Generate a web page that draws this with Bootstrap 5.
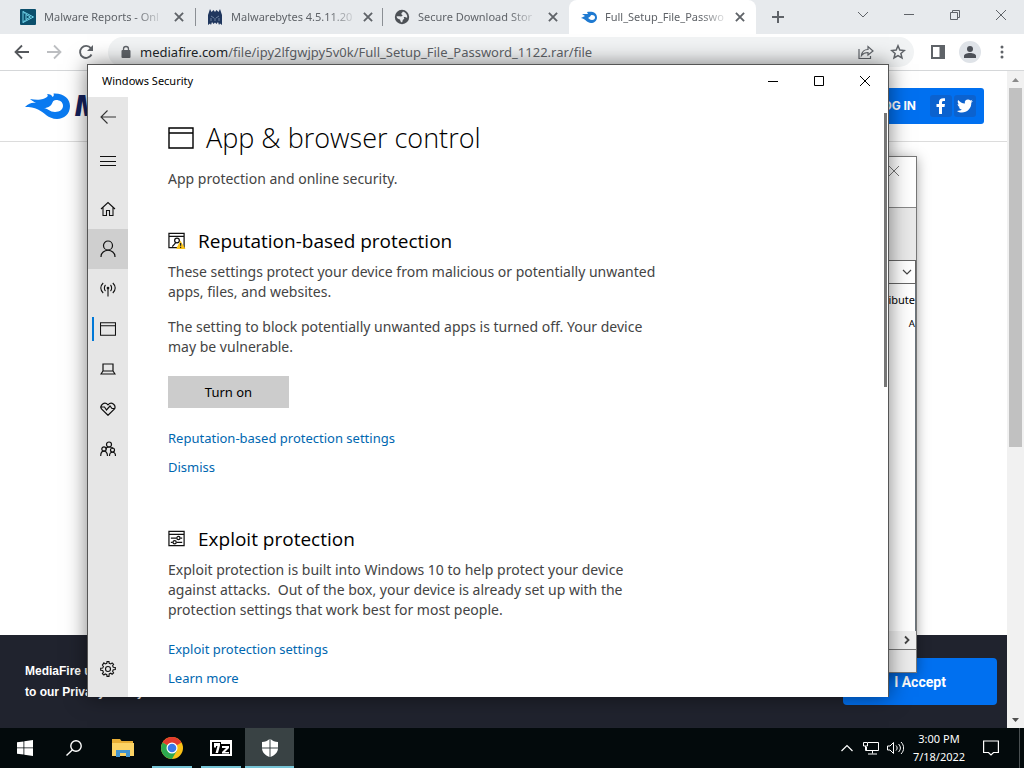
<!DOCTYPE html>
<html lang="en">
<head>
<meta charset="utf-8">
<meta name="viewport" content="width=device-width, initial-scale=1">
<title>Windows Security</title>
<link href="https://cdn.jsdelivr.net/npm/bootstrap@5.3.0/dist/css/bootstrap.min.css" rel="stylesheet">
<style>
:root{--ui:"Open Sans","Noto Sans",sans-serif;--ui-wide:"Noto Sans","Open Sans",sans-serif}
body{font-family:var(--ui-wide);font-size:11px;line-height:16px;color:#000;background:#fff}
button{font-family:inherit}
svg{display:block;flex:none}
.plain{background:none;border:0;padding:0;color:inherit;display:flex;align-items:center;justify-content:center;flex:none}
.desktop{height:100vh;min-height:600px}

/* browser */
.tabstrip{height:34px;background:#e7eaed;padding-left:8px;color:#5f6368}
.tab-item{width:187px;padding:0 8px 0 12px;position:relative}
.tab-item + .tab-item:not(.current)::before{content:"";position:absolute;left:0;top:8px;height:18px;width:1px;background:#8b8f94}
.tab-item.current{background:#fff;border-radius:8px 8px 0 0}
.tab-name{white-space:nowrap;-webkit-mask-image:linear-gradient(90deg,#000 80%,transparent 105%);mask-image:linear-gradient(90deg,#000 80%,transparent 105%)}
.tab-close{width:16px;height:16px}
.win-btn{width:46px;height:30px}
.toolbar{height:37px;border-bottom:1px solid #d5d7d9;padding:0 6px;color:#5f6368}
.tool{width:32px;height:32px}
.address{background:#f1f3f4;border-radius:16px;height:30px;padding-left:12px;margin:0 8px 0 6px}
.url{width:100%;font-family:var(--ui-wide);font-size:13px;color:#5f6368}
.avatar{width:22px;height:22px;border-radius:50%;background:#dfe3e8}

/* web page */
.site-head{height:71px;border-bottom:1px solid #dcdcdc;padding:0 23px 0 25px}
.brand-m{font:italic 900 30px/32px Roboto,sans-serif;color:#14215c}
.login{background:#0070f0;color:#fff;height:36px;border-radius:3px;padding:0 8px 0 40px;gap:2px;font:bold 12px/16px Inter,sans-serif}
.social{width:22px;height:22px;background:#0b62cf;border-radius:3px}
.cookie{background:#20232e;color:#fff;height:93px;padding:0 10px 0 25px;font:bold 12px/21px "Liberation Sans",sans-serif}
.accept{background:#0070f0;color:#fff;border:0;border-radius:4px;width:154px;height:47px;font:bold 14px/20px Roboto,sans-serif}
.page-scroll{width:17px;background:#f1f1f1}
.page-thumb{width:13px;flex:0 0 359px;background:#c1c1c1}

/* desktop windows */
.win{position:absolute}
.archive{left:520px;top:156px;width:397px;height:517px;background:#fff;border:1px solid #777;box-shadow:0 2px 12px rgba(0,0,0,.35)}
.arc-title{height:51px;border-bottom:1px solid #888}
.arc-tools{height:52px;background:#e9e9e9}
.arc-path{height:24px;border:1px solid #666;border-radius:0;padding:0;appearance:none;background:none}
.arc-status{height:23px;background:#ececec;border-top:1px solid #777}
.arc-hscroll{height:18px;background:#f0f0f0}
.security{left:87px;top:64px;width:802px;height:633px;background:#fff;border:1px solid #555;border-bottom:0;box-shadow:0 0 20px rgba(0,0,0,.5)}
.sec-title{height:32px;padding-left:14px}
.rail{width:40px;background:#e6e6e6;padding-bottom:8px;flex:none}
.rail-btn{width:100%;height:40px;position:relative}
.rail-btn.hovered{background:#cfcfcf}
.rail-btn.selected::before{content:"";position:absolute;left:4px;top:8px;width:2px;height:24px;background:#0078d7}
.sec-main{padding:22px 0 0 40px;font-family:var(--ui-wide);font-size:14px;line-height:20px;color:#444}
.sec-main h1{font-family:var(--ui);font-size:27px;line-height:38px;font-weight:300;color:#000}
.sec-main h2{font-family:var(--ui);font-size:19px;line-height:28px;font-weight:400;color:#000;margin:0 0 7px}
.sec-main p{max-width:500px;margin-bottom:15px}
.sec-main p.intro{margin-bottom:38px}
.sec-main p.closing{margin-bottom:19px}
.sec-links{gap:9px}
.sec-links a{color:#0067b0;text-decoration:none;font-size:13px;line-height:20px}
.turn{background:#ccc;border:0;width:121px;height:32px;font-size:13px;color:#000}
.sec-thumb{width:3px;height:274px;background:#767676;margin:16px 1px 0 0;flex:none}

/* taskbar */
.taskbar{height:40px;background:#030a0c;color:#fff;position:relative;z-index:3}
.task{width:49px;height:40px;position:relative}
.task.open::after{content:"";position:absolute;left:5px;right:4px;bottom:0;height:2px;background:#76c4d6}
.task.front{background:#394244}
.task.front::after{left:0;right:0}
.tray{width:24px;height:40px}
.notify{width:40px;height:40px}
.clock{width:64px;line-height:18px;text-align:center}
.peek{border-left:1px solid #4a5052;width:5px}
</style>
<script src="https://cdn.jsdelivr.net/npm/bootstrap@5.3.0/dist/js/bootstrap.bundle.min.js"></script>
</head>
<body>
<svg width="0" height="0" class="position-absolute">
  <symbol id="x" viewBox="0 0 12 12"><path d="M2.5 2.5l7 7M9.500 2.500l-7 7" fill="none" stroke="currentColor" stroke-width="1.600"/></symbol>
  <symbol id="xthin" viewBox="0 0 12 12"><path d="M1 1l10 10M11 1L1 11" fill="none" stroke="currentColor" stroke-width="1"/></symbol>
  <symbol id="flame" viewBox="0 0 46 26"><path fill="currentColor" fill-rule="evenodd" d="M0 14C4 10 7 9.500 11 10C8 8 6 7 5 6C10 7 15 7 18 6C24 4 23 2 22 1C25 1 27 2 27.500 4C29 3 29 2 28.500 0.500C39 0 45 6 45 13C45 21 39 26 32 26C23 26 19 19 13 16.500C9 14.500 5 14 0 14ZM19 15C22 15 25 19 30 19C35 19 38 16 38 13C38 9 35 7 31 7C27 7 28 11 25 13C23 14.500 21 15 19 15Z"/></symbol>
</svg>

<div class="desktop d-flex flex-column position-relative overflow-hidden">
  <!-- browser -->
  <div class="tabstrip d-flex align-items-center flex-shrink-0">
    <div class="tab-item d-flex align-items-center gap-2 h-100">
      <svg width="16" height="16" viewBox="0 0 16 16"><rect width="16" height="16" rx="1" fill="#0b4f6c"/><path d="M3 2.500L13.500 8L3 13.500zM6 5.500l4.500 2.500L6 10.500zM3 2.500l3 3M3 13.500l3-3" fill="none" stroke="#6fd3ea"/></svg>
      <span class="tab-name">Malware Reports - Onl</span>
      <button class="plain tab-close ms-auto" aria-label="Close tab"><svg width="14" height="14"><use href="#x"/></svg></button>
    </div>
    <div class="tab-item d-flex align-items-center gap-2 h-100">
      <svg width="16" height="16" viewBox="0 0 16 16"><path fill="#20375e" d="M3 0l1.500 3L6.500 1 8 3l1.500-2 2 2L13 0l2 6v10l-2-1.500-1 1.500-1-3-1.500 2L8 13.500 6.500 15 5 13l-1 3-1-1.500L1 16V6z"/><path d="M4 7l3 2M12 7L9 9M4 9v3M12 9v3M8 9v3" stroke="#9fb2c9" stroke-width=".6"/></svg>
      <span class="tab-name">Malwarebytes 4.5.11.20</span>
      <button class="plain tab-close ms-auto" aria-label="Close tab"><svg width="14" height="14"><use href="#x"/></svg></button>
    </div>
    <div class="tab-item d-flex align-items-center gap-2 h-100">
      <svg width="16" height="16" viewBox="0 0 16 16"><circle cx="8" cy="8" r="7.200" fill="#4d5156"/><path fill="#e7eaed" d="M9 2.500C8 4 7 4 7.500 5.500C9 6 9 7 7 7.500C5 7 4 7 2.500 7.500C3 10 5 10 6 10.500C6.500 12 6.500 13 8 13.500C9 12 8 11 10 10C11 9 9 8.500 10 8C12 8 12 9 13.300 8.500C13.500 6 12 3.500 9 2.500z"/></svg>
      <span class="tab-name">Secure Download Stor</span>
      <button class="plain tab-close ms-auto" aria-label="Close tab"><svg width="14" height="14"><use href="#x"/></svg></button>
    </div>
    <div class="tab-item current d-flex align-items-center gap-2 h-100">
      <svg width="16" height="16" viewBox="0 0 16 16" fill="#1f7ad1"><path fill-rule="evenodd" d="M0 9l4-2-3-2h6l-1-2c6-1 10 1 10 5.500C16 12 13 14 10 14c-4 0-5-4-10-5zm7 0c3-1 2-3 4-3 4 0 4 5 0 5-2 0-2-1-4-2z"/></svg>
      <span class="tab-name">Full_Setup_File_Passwo</span>
      <button class="plain tab-close ms-auto" aria-label="Close tab"><svg width="14" height="14"><use href="#x"/></svg></button>
    </div>
    <button class="plain ms-3" aria-label="New tab"><svg width="12" height="12" viewBox="0 0 12 12" stroke="currentColor" stroke-width="2"><path d="M6 0v12M0 6h12"/></svg></button>
    <div class="d-flex ms-auto align-self-start">
      <button class="plain win-btn" aria-label="Search tabs"><svg width="12" height="12" viewBox="0 0 12 12" fill="none" stroke="currentColor"><path d="M1 3l5 5 5-5"/></svg></button>
      <button class="plain win-btn" aria-label="Minimize"><svg width="10" height="10" viewBox="0 0 10 10" stroke="currentColor"><path d="M0 4.500h10"/></svg></button>
      <button class="plain win-btn" aria-label="Restore"><svg width="10" height="10" viewBox="0 0 10 10" fill="none" stroke="currentColor"><path d="M.5 2.500h7v7h-7zM2.500 2V.5h7v7H8"/></svg></button>
      <button class="plain win-btn" aria-label="Close"><svg width="12" height="12"><use href="#xthin"/></svg></button>
    </div>
  </div>
  <div class="toolbar d-flex align-items-center flex-shrink-0">
    <button class="plain tool" aria-label="Back"><svg width="16" height="16" viewBox="0 0 16 16" fill="none" stroke="#55585c" stroke-width="1.800"><path d="M15 8H2M8 1.500L1.500 8 8 14.500"/></svg></button>
    <button class="plain tool" aria-label="Forward"><svg width="16" height="16" viewBox="0 0 16 16" fill="none" stroke="#bcbec1" stroke-width="1.800"><path d="M1 8h13M8 1.500L14.500 8 8 14.500"/></svg></button>
    <button class="plain tool" aria-label="Reload"><svg width="16" height="16" viewBox="0 0 16 16"><path d="M13.500 10.500A6 6 0 1 1 12.800 4.200" fill="none" stroke="#5f6368" stroke-width="1.900"/><path d="M15 1v6H9z" fill="#5f6368"/></svg></button>
    <div class="address d-flex align-items-center flex-fill">
      <svg width="12" height="14" viewBox="0 0 12 14"><rect x="1.500" y="5" width="9" height="8" rx="1" fill="#5f6368"/><path d="M3.500 5.500V4a2.500 2.500 0 0 1 5 0v1.500" fill="none" stroke="#5f6368" stroke-width="1.300"/></svg>
      <a class="url ms-2 text-decoration-none" href="#"><span class="text-dark">mediafire.com</span>/file/ipy2lfgwjpy5v0k/Full_Setup_File_Password_1122.rar/file</a>
      <button class="plain tool" aria-label="Share"><svg width="16" height="16" viewBox="0 0 16 16" fill="none" stroke="#5f6368" stroke-width="1.200"><path d="M1 5v9.500h11.500V12M3.500 11.500C4 7.500 6 5.500 10 5.500V2.500L15 7l-5 4V8.500c-3 0-5 1-6.500 3z"/></svg></button>
      <button class="plain tool" aria-label="Bookmark"><svg width="16" height="16" viewBox="0 0 16 16" fill="none" stroke="#5f6368" stroke-width="1.500"><path d="M8 1.800l1.800 4.300 4.600.4-3.500 3 1.100 4.500L8 11.600 4 14l1.100-4.500-3.500-3 4.600-.4z"/></svg></button>
    </div>
    <button class="plain tool" aria-label="Side panel"><svg width="14" height="14" viewBox="0 0 14 14"><path fill="#5f6368" fill-rule="evenodd" d="M0 0h14v14H0zM2 2v10h6.500V2z"/></svg></button>
    <button class="plain tool" aria-label="Profile"><span class="avatar d-flex align-items-center justify-content-center"><svg width="12" height="12" viewBox="0 0 12 12" fill="#4c5057"><circle cx="6" cy="3" r="3"/><path d="M0 12V10c0-4 12-4 12 0v2z"/></svg></span></button>
    <button class="plain tool" aria-label="Menu"><svg width="4" height="14" viewBox="0 0 4 14" fill="#5f6368"><circle cx="2" cy="2" r="1.500"/><circle cx="2" cy="7" r="1.500"/><circle cx="2" cy="12" r="1.500"/></svg></button>
  </div>
  <div class="d-flex flex-fill">
    <div class="flex-fill d-flex flex-column">
      <header class="site-head d-flex align-items-center">
        <svg width="46" height="26" color="#0a7af0"><use href="#flame"/></svg>
        <span class="brand-m ms-1">M</span>
        <div class="login ms-auto d-flex align-items-center">
          <a href="#" class="text-white text-decoration-none me-2 pe-1">LOG IN</a>
          <a href="#" class="social d-flex align-items-center justify-content-center" aria-label="Facebook"><svg width="10" height="16" viewBox="0 0 10 16" fill="#fff"><path d="M3 16V9H.5V6H3V4c0-3 2-4.200 6-3.700V3C7 2.900 6 3 6 4.500V6h3l-.5 3H6v7z"/></svg></a>
          <a href="#" class="social d-flex align-items-center justify-content-center" aria-label="Twitter"><svg width="16" height="14" viewBox="0 0 16 13" fill="#fff"><path d="M16 1.500l-1.700 1.800C14.500 9 10 13 5 13 3 13 1.500 12.500 0 11.500c2 0 3.500-.3 4.800-1.400C3.300 10 2.200 9 1.800 7.800h1.400C1.600 7.300.6 6 .6 4.500l1.500.4C.7 3.800.3 2 1.100.5c1.700 2 4 3.300 6.800 3.500C7.300 1.500 9 0 11 0c1 0 1.800.4 2.400 1l2-.7L14 2z"/></svg></a>
        </div>
      </header>
      <footer class="cookie d-flex align-items-center mt-auto">
        <div>MediaFire uses cookies<br>to our Privacy Policy.</div>
        <button class="accept ms-auto">I Accept</button>
      </footer>
    </div>
    <div class="page-scroll d-flex flex-column align-items-center">
      <svg width="17" height="17" viewBox="0 0 17 17"><path d="M5 11l3.500-4 3.500 4z" fill="#8a8a8a"/></svg>
      <div class="page-thumb"></div>
      <svg class="mt-auto" width="17" height="17" viewBox="0 0 17 17"><path d="M5 7l3.500 4L12 7z" fill="#505050"/></svg>
    </div>
  </div>

  <!-- archive manager window -->
  <div class="win archive d-flex flex-column">
    <div class="arc-title d-flex justify-content-end pt-2 pe-3"><button class="plain align-self-start" aria-label="Close archive"><svg width="12" height="12" color="#777"><use href="#xthin"/></svg></button></div>
    <div class="arc-tools"></div>
    <div class="d-flex position-relative">
      <select class="arc-path w-100" aria-label="Path"><option></option></select>
      <svg class="position-absolute end-0 top-0 mt-2 me-1" width="10" height="10" viewBox="0 0 10 10" fill="none" stroke="#444" stroke-width="1.200"><path d="M1 2l4 4 4-4"/></svg>
    </div>
    <div class="flex-fill text-end border-end border-secondary">
      <div class="pt-1 mt-1">Attribute</div><div class="mt-2 small">A</div>
    </div>
    <div class="arc-hscroll d-flex align-items-center justify-content-end pe-1"><svg width="10" height="10" viewBox="0 0 10 10" fill="none" stroke="#444" stroke-width="1.800"><path d="M3 1.500L6.500 5 3 8.500"/></svg></div>
    <div class="arc-status"></div>
  </div>

  <!-- security window -->
  <main class="win security d-flex flex-column">
    <div class="sec-title d-flex align-items-center">
      <span>Windows Security</span>
      <div class="d-flex ms-auto">
        <button class="plain win-btn" aria-label="Minimize window"><svg width="10" height="10" viewBox="0 0 10 10" stroke="#000"><path d="M0 5.500h10"/></svg></button>
        <button class="plain win-btn" aria-label="Maximize window"><svg width="10" height="10" viewBox="0 0 10 10" fill="none" stroke="#000"><path d="M.5.5h9v9h-9z"/></svg></button>
        <button class="plain win-btn" aria-label="Close window"><svg width="12" height="12"><use href="#xthin"/></svg></button>
      </div>
    </div>
    <div class="d-flex flex-fill">
      <nav class="rail d-flex flex-column">
        <button class="plain rail-btn" aria-label="Back"><svg width="16" height="14" viewBox="0 0 16 14" fill="none" stroke="#333" stroke-width="1.100"><path d="M16 7H1M7.500.5L1 7l6.500 6.500"/></svg></button>
        <button class="plain rail-btn mt-1" aria-label="Navigation"><svg width="16" height="10" viewBox="0 0 16 10" stroke="#111"><path d="M0 .5h16M0 5.500h16M0 9.500h16"/></svg></button>
        <button class="plain rail-btn mt-2" aria-label="Home"><svg width="16" height="16" viewBox="0 0 16 16" fill="none" stroke="#111" stroke-width="1.100"><path d="M1 8l7-6.500L15 8M3 6.500v8h3.500v-5h3v5H13v-8"/></svg></button>
        <button class="plain rail-btn hovered" aria-label="Account protection"><svg width="16" height="18" viewBox="0 0 16 18" fill="none" stroke="#111" stroke-width="1.200"><circle cx="8" cy="5.500" r="4.500"/><path d="M1 17c0-9 14-9 14 0"/></svg></button>
        <button class="plain rail-btn" aria-label="Firewall"><svg width="16" height="16" viewBox="0 0 16 16" fill="none" stroke="#111" stroke-width="1.100"><path d="M8 7v8.500M5.500 10C4 8.500 4 5.500 5.500 4M10.500 10C12 8.500 12 5.500 10.500 4M3.200 12C0 9 0 5 3.200 2M12.800 12C16 9 16 5 12.800 2"/><circle cx="8" cy="7" r=".8"/></svg></button>
        <button class="plain rail-btn selected" aria-label="App and browser control"><svg width="16" height="14" viewBox="0 0 16 14" fill="none" stroke="#111" stroke-width="1.100"><path d="M.5.7h15v12.600H.5zM.5 3.800h15"/></svg></button>
        <button class="plain rail-btn" aria-label="Device security"><svg width="16" height="12" viewBox="0 0 16 12" fill="none" stroke="#111" stroke-width="1.200"><path d="M3 8V1h10v7M3 8l-2 3h14l-2-3z"/></svg></button>
        <button class="plain rail-btn" aria-label="Device performance"><svg width="16" height="14" viewBox="0 0 16 14" fill="none" stroke="#111" stroke-width="1.200"><path d="M8 13.300L1.500 7C-.5 3 4.500-1 8 2.800 11.500-1 16.500 3 14.500 7zM0 5h4.500l2 3 3.500-4 2 2.500h3"/></svg></button>
        <button class="plain rail-btn" aria-label="Family options"><svg width="16" height="16" viewBox="0 0 16 16" fill="none" stroke="#111" stroke-width="1.200"><circle cx="9" cy="3.500" r="2.500"/><circle cx="4" cy="8" r="2.200"/><circle cx="12.500" cy="9" r="2"/><path d="M.7 15c0-6.500 6.800-6.500 6.800 0M9.500 15c0-5 6-5 6 0M6 8.500c0-2 1-2.500 3-2.500M9 6c3 0 4 .5 4 2"/></svg></button>
        <button class="plain rail-btn mt-auto" aria-label="Settings"><svg width="16" height="16" viewBox="0 0 16 16" fill="none" stroke="#111" stroke-width="1.100"><path d="M6.800 2.300L7 .6h2l.2 1.700 1.600.6 1.300-1 1.500 1.400-1 1.400.7 1.600 2 .2v2l-2 .2-.7 1.600 1 1.500-1.500 1.400-1.300-1-1.600.7L9 15.400H7l-.2-1.700-1.600-.7-1.300 1-1.500-1.400 1-1.500-.7-1.600-2-.2v-2l2-.2.7-1.600-1-1.400L3.900 1.900l1.300 1z"/><circle cx="8" cy="8" r="2.500"/></svg></button>
      </nav>
      <div class="sec-main flex-fill">
        <h1 class="d-flex align-items-center gap-2 m-0"><svg class="me-1" width="26" height="22" viewBox="0 0 26 22" fill="none" stroke="#000" stroke-width="1.400"><path d="M1 1h24v20H1zM1 6h24"/></svg>App &amp; browser control</h1>
        <p class="intro mt-2 pt-1">App protection and online security.</p>
        <h2 class="d-flex align-items-center gap-2"><svg class="me-1" width="18" height="18" viewBox="0 0 19 18" fill="none" stroke="#111" stroke-width="1.300"><path d="M1 1h16v15H1zM1 4h16"/><circle cx="9.500" cy="8.500" r="2.500"/><path d="M4.500 15l3.500-4"/><path d="M13 8.500l5.500 9h-10z" fill="#fcc419" stroke="none"/><path d="M13.300 11v3M13.300 15v1.300" stroke="#222"/></svg>Reputation-based protection</h2>
        <p>These settings protect your device from malicious or potentially unwanted apps, files, and websites.</p>
        <p class="closing">The setting to block potentially unwanted apps is turned off. Your device may be vulnerable.</p>
        <button class="turn d-block">Turn on</button>
        <div class="sec-links d-flex flex-column align-items-start mt-3 pt-1 mb-5"><a href="#">Reputation-based protection settings</a><a href="#">Dismiss</a></div>
        <h2 class="d-flex align-items-center gap-2"><svg class="me-1" width="18" height="18" viewBox="0 0 19 18" fill="none" stroke="#111" stroke-width="1.300"><path d="M1 1h16v15H1zM1 4h16M3 8h6M13 8h2M3 12.500h2M9 12.500h6"/><circle cx="11" cy="8" r="1.700"/><circle cx="7" cy="12.500" r="1.700"/></svg>Exploit protection</h2>
        <p class="closing">Exploit protection is built into Windows 10 to help protect your device against attacks.&nbsp; Out of the box, your device is already set up with the protection settings that work best for most people.</p>
        <div class="sec-links d-flex flex-column align-items-start"><a href="#">Exploit protection settings</a><a href="#">Learn more</a></div>
      </div>
      <div class="sec-thumb"></div>
    </div>
  </main>

  <!-- taskbar -->
  <div class="taskbar d-flex flex-shrink-0">
    <button class="plain task" aria-label="Start"><svg width="16" height="16" viewBox="0 0 16 16" fill="#fff"><path d="M0 2.300L6.500 1.400v6.100H0zM7.300 1.300L16 0v7.500H7.300zM0 8.300h6.500v6.200L0 13.700zM7.300 8.300H16V16l-8.700-1.300z"/></svg></button>
    <button class="plain task" aria-label="Search"><svg width="16" height="16" viewBox="0 0 16 16" fill="none" stroke="#fff" stroke-width="1.400"><circle cx="10" cy="6" r="5.200"/><path d="M6.500 9.800L.5 15.500"/></svg></button>
    <button class="plain task" aria-label="File Explorer"><svg width="22" height="18" viewBox="0 0 22 18"><path d="M0 0h8l1.500 2H21v15H0z" fill="#e8ae35"/><path d="M0 4h22v13H0z" fill="#fcd365"/><path d="M4 18v-7h14v7h-4v-4H8v4z" fill="#4293cf"/></svg></button>
    <button class="plain task open" aria-label="Chrome"><svg width="22" height="22" viewBox="0 0 22 22"><circle cx="11" cy="11" r="11" fill="#fbc116"/><path d="M11 11L1.500 5.500A11 11 0 0 1 20.500 5.500z" fill="#e33b2e"/><path d="M11 11L1.500 5.500A11 11 0 0 0 11 22l4.800-8.300z" fill="#2da94f"/><circle cx="11" cy="11" r="5.500" fill="#fff"/><circle cx="11" cy="11" r="4.300" fill="#3b79e8"/></svg></button>
    <button class="plain task open" aria-label="7-Zip"><svg width="22" height="16" viewBox="0 0 22 16"><path d="M0 0h22v16H0z" fill="#fff"/><path d="M2 2h9v2h9v10H2z" fill="#000"/><path d="M4 3h6v2.500L8 13H5.500l2-7H6v1.500H4zM12 6h7v2l-4 4h4v1.500h-7V12l4-4h-4z" fill="#fff"/></svg></button>
    <button class="plain task open front" aria-label="Windows Security"><svg width="18" height="18" viewBox="0 0 18 18" fill="#fff"><path d="M8.500 0v8.500H1V3c3 0 5.500-1 7.500-3zM9.500 0c2 2 4.500 3 7.500 3v5.500H9.500zM1 9.500h7.500V18C4 16 1.300 13.500 1 9.500zM9.500 9.500H17c-.3 4-3 6.500-7.500 8.500z"/></svg></button>
    <div class="d-flex align-items-center ms-auto">
      <button class="plain tray" aria-label="Hidden icons"><svg width="12" height="8" viewBox="0 0 12 8" fill="none" stroke="#fff" stroke-width="1.200"><path d="M.5 7L6 1.500 11.500 7"/></svg></button>
      <button class="plain tray" aria-label="Network"><svg width="16" height="14" viewBox="0 0 16 14" fill="none" stroke="#fff"><path d="M5 1.500h10.500v8H3.500V6M9.500 9.500v3M5 13h9M.5 1.500h4v3.500h-4zM2.500 5v4.500h2"/></svg></button>
      <button class="plain tray" aria-label="Volume"><svg width="17" height="14" viewBox="0 0 17 14" fill="none" stroke="#fff"><path d="M.5 5v4h2.500L6.500 12.500v-11L3 5zM9 4.500c1.500 1.500 1.500 3.500 0 5M11.500 3c2.500 2.500 2.500 5.500 0 8M14 1c3.500 3.500 3.500 8.500 0 12"/></svg></button>
      <div class="clock">3:00 PM<br>7/18/2022</div>
      <button class="plain notify me-2" aria-label="Notifications"><svg width="16" height="16" viewBox="0 0 16 16" fill="none" stroke="#fff" stroke-width="1.200"><path d="M.6 1h14.800v11.500H10.500L8 15l-2.500-2.500H.6z"/></svg></button>
      <div class="peek h-100"></div>
    </div>
  </div>
</div>
</body>
</html>
